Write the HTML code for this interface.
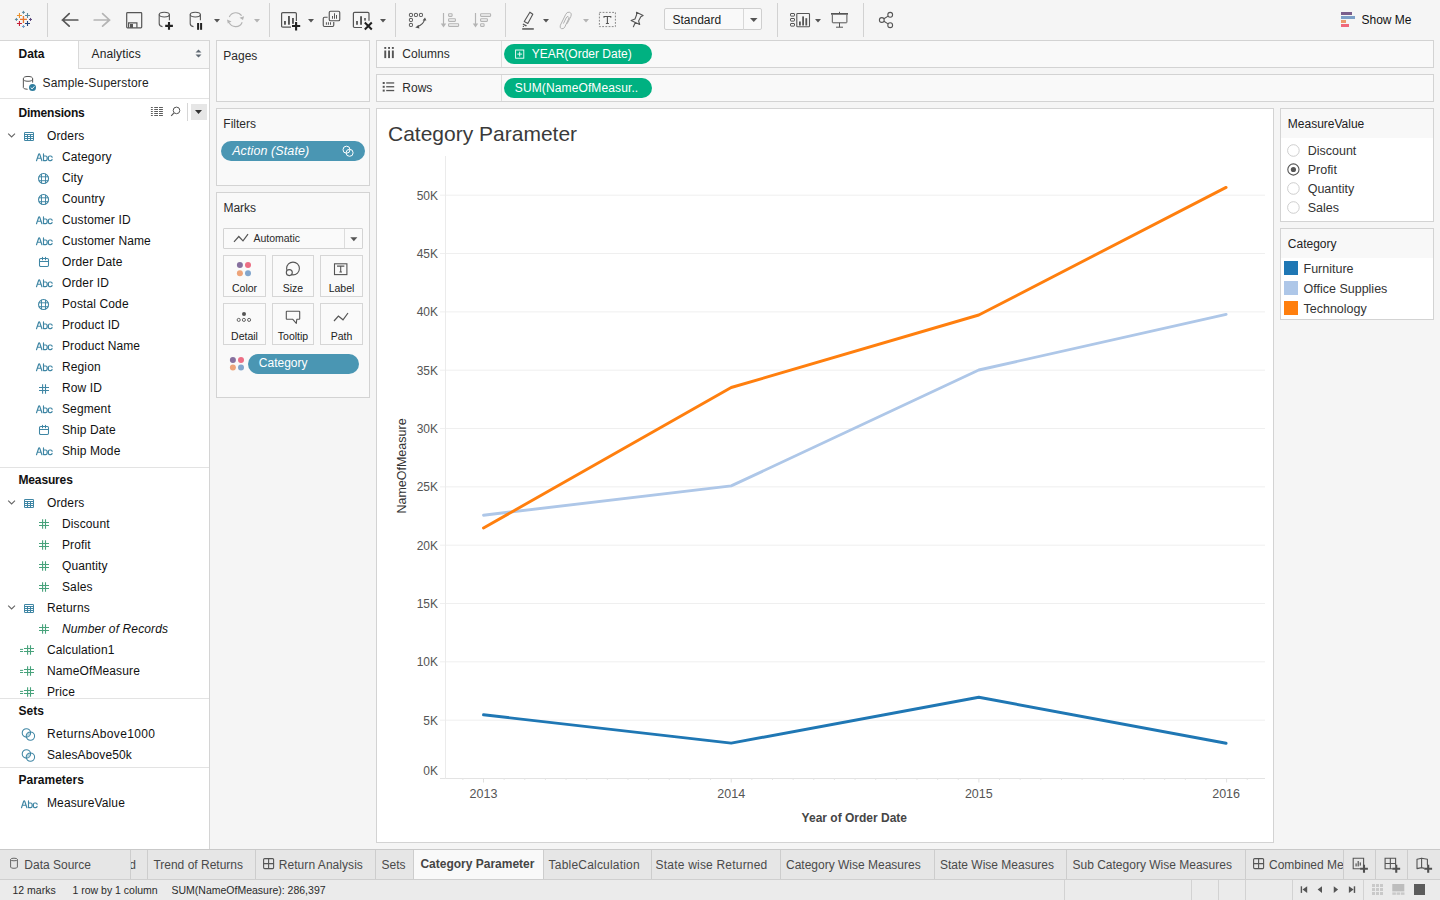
<!DOCTYPE html>
<html><head><meta charset="utf-8"><title>Tableau - Category Parameter</title>
<style>
html,body{margin:0;padding:0;}
body{width:1440px;height:900px;overflow:hidden;position:relative;background:#f5f5f5;font-family:"Liberation Sans", sans-serif;}
.t{position:absolute;white-space:nowrap;line-height:16px;font-family:"Liberation Sans", sans-serif;}
svg{overflow:visible}
</style></head><body>

<svg style="position:absolute;left:8px;top:4px;" width="30" height="30" viewBox="0 0 30 30"><path d="M11.940000000000001 15.440000000000001H18.94M15.440000000000001 11.940000000000001V18.94" stroke="#e8762c" stroke-width="1.3"/><path d="M8.95 11.45H13.95M11.45 8.95V13.95" stroke="#eb912b" stroke-width="1.1"/><path d="M17.0 11.45H22.0M19.5 8.95V13.95" stroke="#5b879b" stroke-width="1.1"/><path d="M8.95 19.5H13.95M11.45 17.0V22.0" stroke="#c72037" stroke-width="1.1"/><path d="M17.0 19.5H22.0M19.5 17.0V22.0" stroke="#1f457e" stroke-width="1.1"/><path d="M13.940000000000001 8.36H16.94M15.440000000000001 6.859999999999999V9.86" stroke="#5b879b" stroke-width="1.0"/><path d="M6.899999999999999 15.440000000000001H9.899999999999999M8.399999999999999 13.940000000000001V16.94" stroke="#5b879b" stroke-width="1.0"/><path d="M21.0 15.440000000000001H24.0M22.5 13.940000000000001V16.94" stroke="#59457c" stroke-width="1.0"/><path d="M13.940000000000001 22.5H16.94M15.440000000000001 21.0V24.0" stroke="#7199c6" stroke-width="1.0"/></svg>
<div style="position:absolute;left:47px;top:3px;width:1px;height:34px;background:#d2d2d2"></div>
<svg style="position:absolute;left:60px;top:12px;" width="20" height="16" viewBox="0 0 20 16"><path d="M2.3 8H17.8M9.2 1.6L2.5 8L9.2 14.2" stroke="#555" stroke-width="1.7" fill="none" stroke-linecap="round" stroke-linejoin="round"/></svg>
<svg style="position:absolute;left:92px;top:12px;" width="20" height="16" viewBox="0 0 20 16"><path d="M2.2 8H17.7M10.6 1.6L17.5 8L10.6 14.2" stroke="#b4b4b4" stroke-width="1.7" fill="none" stroke-linecap="round" stroke-linejoin="round"/></svg>
<svg style="position:absolute;left:124px;top:10px;" width="20" height="20" viewBox="0 0 20 20"><rect x="2.7" y="2.6" width="15" height="15.2" rx="0.8" fill="none" stroke="#555" stroke-width="1.2"/><path d="M4.6 17.8V12.8H12.9V17.8" fill="none" stroke="#555" stroke-width="1.2"/><rect x="6" y="14" width="3" height="3.8" fill="#555"/></svg>
<svg style="position:absolute;left:159px;top:10px;" width="20" height="22" viewBox="0 0 20 22"><ellipse cx="5.3" cy="4.6" rx="5.1" ry="2.4" fill="none" stroke="#555" stroke-width="1.1"/><path d="M0.2 4.6V13.6Q0.2 16.2 3.5 16.6M10.4 4.6V10.2" fill="none" stroke="#555" stroke-width="1.1"/><path d="M6.2 15.9H13.9M10 12V19.8" stroke="#222" stroke-width="2.1"/></svg>
<svg style="position:absolute;left:190px;top:10px;" width="20" height="22" viewBox="0 0 20 22"><ellipse cx="5.3" cy="4.6" rx="5.1" ry="2.4" fill="none" stroke="#555" stroke-width="1.1"/><path d="M0.2 4.6V13.6Q0.2 16.2 3.5 16.6M10.4 4.6V10.2" fill="none" stroke="#555" stroke-width="1.1"/><rect x="7.1" y="13" width="2" height="6.8" fill="#222"/><rect x="10.1" y="13" width="2" height="6.8" fill="#222"/></svg>
<svg style="position:absolute;left:213.5px;top:19px;" width="6" height="4" viewBox="0 0 6 4"><path d="M0 0H6L3 3.5Z" fill="#555"/></svg>
<svg style="position:absolute;left:226px;top:11px;" width="20" height="18" viewBox="0 0 20 18"><path d="M3.3 5.9A7.2 7.2 0 0 1 15.6 4.6M16.2 11.2A7.2 7.2 0 0 1 3.2 11.8" fill="none" stroke="#b4b4b4" stroke-width="1.15"/><path d="M18.1 5.2L17 9L13.5 6.8Z M1 8.5L1.8 12.4L5.5 10.6Z" fill="#b4b4b4"/></svg>
<svg style="position:absolute;left:253.5px;top:19px;" width="6" height="4" viewBox="0 0 6 4"><path d="M0 0H6L3 3.5Z" fill="#b4b4b4"/></svg>
<div style="position:absolute;left:269px;top:3px;width:1px;height:34px;background:#d2d2d2"></div>
<svg style="position:absolute;left:281px;top:12px;" width="22" height="20" viewBox="0 0 22 20"><path d="M10 15.2H1.8Q0.6 15.2 0.6 14V1.8Q0.6 0.6 1.8 0.6H14.2Q15.4 0.6 15.4 1.8V9" fill="none" stroke="#555" stroke-width="1.2"/><rect x="3" y="9" width="1.9" height="3.7" fill="#555"/><rect x="7" y="4" width="1.9" height="8.7" fill="#555"/><rect x="11" y="6" width="1.9" height="5.8" fill="#555"/><path d="M11 14H19.2M15.1 10V18.6" stroke="#222" stroke-width="2.1"/></svg>
<svg style="position:absolute;left:307.5px;top:19px;" width="6" height="4" viewBox="0 0 6 4"><path d="M0 0H6L3 3.5Z" fill="#555"/></svg>
<svg style="position:absolute;left:318px;top:6px;" width="26" height="26" viewBox="0 0 26 26"><rect x="11.25" y="5.25" width="10.5" height="9.5" rx="1.3" fill="none" stroke="#555" stroke-width="1.15"/><rect x="14" y="10" width="1" height="2.75" fill="#555"/><rect x="16" y="7.25" width="1" height="5.5" fill="#555"/><rect x="18" y="9" width="1" height="3.75" fill="#555"/><path d="M9.6 11.25H6.5Q5.25 11.25 5.25 12.5V19.25Q5.25 20.5 6.5 20.5H14.5Q15.75 20.5 15.75 19.25V16" fill="none" stroke="#555" stroke-width="1.15"/><rect x="7.9" y="16.25" width="1" height="2.5" fill="#555"/><rect x="9.9" y="16.25" width="1" height="2.5" fill="#555"/><rect x="12" y="16.25" width="1" height="2.5" fill="#555"/></svg>
<svg style="position:absolute;left:350px;top:6px;" width="26" height="26" viewBox="0 0 26 26"><path d="M12 21.5H4.6Q3.4 21.5 3.4 20.3V7.6Q3.4 6.4 4.6 6.4H17.8Q19 6.4 19 7.6V14.75" fill="none" stroke="#555" stroke-width="1.2"/><rect x="6.1" y="15" width="1.8" height="3.75" fill="#555"/><rect x="10.1" y="10.25" width="1.9" height="8.5" fill="#555"/><rect x="14.2" y="12" width="1.6" height="2.6" fill="#555"/><path d="M14.8 16.5L21.8 23.5M21.8 16.5L14.8 23.5" stroke="#222" stroke-width="2"/></svg>
<svg style="position:absolute;left:379.5px;top:19px;" width="6" height="4" viewBox="0 0 6 4"><path d="M0 0H6L3 3.5Z" fill="#555"/></svg>
<div style="position:absolute;left:395px;top:3px;width:1px;height:34px;background:#d2d2d2"></div>
<svg style="position:absolute;left:405px;top:10px;" width="24" height="20" viewBox="0 0 24 20"><rect x="4.45" y="3.45" width="3" height="3" rx="0.6" fill="none" stroke="#555" stroke-width="1"/><rect x="9.45" y="3.45" width="3" height="3" rx="0.6" fill="none" stroke="#555" stroke-width="1"/><rect x="14.45" y="3.45" width="3" height="3" rx="0.6" fill="none" stroke="#555" stroke-width="1"/><rect x="4.45" y="8.45" width="3" height="3" rx="0.6" fill="none" stroke="#555" stroke-width="1"/><rect x="4.45" y="13.45" width="3" height="3" rx="0.6" fill="none" stroke="#555" stroke-width="1"/><path d="M12.2 16.6Q18.2 15 19.6 9.4" fill="none" stroke="#555" stroke-width="1.1"/><path d="M10.2 17.6L13.6 15L14.4 18.6Z M20 7.6L17.6 10.6L21.4 10.6Z" fill="#555"/></svg>
<svg style="position:absolute;left:440px;top:10px;" width="20" height="20" viewBox="0 0 20 20"><path d="M3.5 3V15.5" stroke="#b4b4b4" stroke-width="1.2"/><path d="M0.8 13.6H6.2L3.5 17.4Z" fill="#b4b4b4"/><rect x="8.6" y="3.8" width="3.5" height="2.6" rx="0.6" fill="none" stroke="#b4b4b4" stroke-width="1.1"/><rect x="8.6" y="8.8" width="6.8" height="2.6" rx="0.6" fill="none" stroke="#b4b4b4" stroke-width="1.1"/><rect x="8.6" y="13.8" width="10" height="2.6" rx="0.6" fill="none" stroke="#b4b4b4" stroke-width="1.1"/></svg>
<svg style="position:absolute;left:472px;top:10px;" width="20" height="20" viewBox="0 0 20 20"><path d="M3.5 3V15.5" stroke="#b4b4b4" stroke-width="1.2"/><path d="M0.8 13.6H6.2L3.5 17.4Z" fill="#b4b4b4"/><rect x="8.6" y="3.8" width="10" height="2.6" rx="0.6" fill="none" stroke="#b4b4b4" stroke-width="1.1"/><rect x="8.6" y="8.8" width="6.8" height="2.6" rx="0.6" fill="none" stroke="#b4b4b4" stroke-width="1.1"/><rect x="8.6" y="13.8" width="3.5" height="2.6" rx="0.6" fill="none" stroke="#b4b4b4" stroke-width="1.1"/></svg>
<div style="position:absolute;left:505px;top:3px;width:1px;height:34px;background:#d2d2d2"></div>
<svg style="position:absolute;left:518px;top:8px;" width="20" height="24" viewBox="0 0 20 24"><path d="M11.9 4.2L14.8 6.25L9.8 15.4L6.25 13.5Z" fill="none" stroke="#555" stroke-width="1.1" stroke-linejoin="round"/><path d="M5.2 15.4L9 17.4L8 18.4L4.6 16.6Z" fill="#555"/><circle cx="5.4" cy="18.4" r="0.65" fill="#555"/><rect x="4.2" y="20.2" width="11.6" height="1.5" fill="#555"/></svg>
<svg style="position:absolute;left:543px;top:19px;" width="6" height="4" viewBox="0 0 6 4"><path d="M0 0H6L3 3.5Z" fill="#555"/></svg>
<svg style="position:absolute;left:556px;top:7.5px;" width="20" height="24" viewBox="0 0 20 24"><path d="M11.3 15.4L14.8 8.5Q16.2 5 13.3 4.2Q10.9 3.6 9.6 6.6L4.4 17.2Q3.2 20 5.6 20.7Q7.8 21.3 8.9 18.8L12.6 11Q13.4 9 12.1 8.6Q10.9 8.2 10.1 10L7.6 15.2" fill="none" stroke="#adadad" stroke-width="0.95" stroke-linecap="round"/></svg>
<svg style="position:absolute;left:583px;top:19px;" width="6" height="4" viewBox="0 0 6 4"><path d="M0 0H6L3 3.5Z" fill="#b4b4b4"/></svg>
<svg style="position:absolute;left:598px;top:11px;" width="20" height="18" viewBox="0 0 20 18"><rect x="1.4" y="1.4" width="16" height="14.2" fill="none" stroke="#888" stroke-width="1" stroke-dasharray="1.8 1.4"/><path d="M6 6.7V5.5H12.8V6.7M9.4 5.5V12.5M7.9 12.5H10.9" fill="none" stroke="#555" stroke-width="1.1"/></svg>
<svg style="position:absolute;left:629px;top:10px;" width="18" height="20" viewBox="0 0 18 20"><path d="M7.5 2.2L14.1 5.4L11.8 6.7L9.6 11L10.7 14.5L2.1 10.5L6 9L7.6 4.7Z M6.3 12.6L4.4 16.7" fill="none" stroke="#555" stroke-width="1.1" stroke-linejoin="round" stroke-linecap="round"/></svg>
<div style="position:absolute;left:664px;top:8px;width:98px;height:22px;background:#f9f9f9;border:1px solid #cfcfcf;border-radius:2px;box-sizing:border-box"></div>
<div style="position:absolute;left:743px;top:9px;width:1px;height:21px;background:#d8d8d8"></div>
<div class="t" style="left:672.5px;top:12.0px;font-size:12px;color:#222;font-weight:normal;font-style:normal;">Standard</div>
<svg style="position:absolute;left:749.5px;top:17.5px;" width="8" height="5" viewBox="0 0 8 5"><path d="M0 0H7.5L3.75 4Z" fill="#555"/></svg>
<div style="position:absolute;left:777px;top:3px;width:1px;height:34px;background:#d2d2d2"></div>
<svg style="position:absolute;left:788px;top:11px;" width="30" height="18" viewBox="0 0 30 18"><rect x="2.5" y="2.5" width="4" height="2.6" rx="0.5" fill="none" stroke="#555" stroke-width="1"/><rect x="2.5" y="7.5" width="4" height="2.6" rx="0.5" fill="none" stroke="#555" stroke-width="1"/><rect x="2.5" y="12.5" width="4" height="2.6" rx="0.5" fill="none" stroke="#555" stroke-width="1"/><rect x="8.8" y="2.5" width="12.7" height="13.3" rx="0.8" fill="none" stroke="#555" stroke-width="1.1"/><rect x="11" y="10.5" width="1.8" height="4" fill="#555"/><rect x="14.2" y="5.4" width="1.8" height="9.1" fill="#555"/><rect x="17.4" y="7.2" width="1.8" height="7.3" fill="#555"/></svg>
<svg style="position:absolute;left:815px;top:19px;" width="6" height="4" viewBox="0 0 6 4"><path d="M0 0H6L3 3.5Z" fill="#555"/></svg>
<svg style="position:absolute;left:829px;top:10px;" width="22" height="20" viewBox="0 0 22 20"><rect x="2" y="3" width="17" height="1.7" fill="#555"/><path d="M10.5 1.8V3M3.3 4.6V12.2Q3.3 12.8 3.9 12.8H17.3Q17.9 12.8 17.9 12.2V4.6M10.5 12.8V17.2M7 17.2H14" fill="none" stroke="#555" stroke-width="1"/></svg>
<div style="position:absolute;left:863px;top:3px;width:1px;height:34px;background:#d2d2d2"></div>
<svg style="position:absolute;left:877px;top:10px;" width="20" height="20" viewBox="0 0 20 20"><circle cx="13.2" cy="4.8" r="2.4" fill="none" stroke="#555" stroke-width="1.1"/><circle cx="4.8" cy="10" r="2.4" fill="none" stroke="#555" stroke-width="1.1"/><circle cx="13.2" cy="15.2" r="2.4" fill="none" stroke="#555" stroke-width="1.1"/><path d="M6.9 8.8L11.1 6.1M6.9 11.2L11.1 13.9" stroke="#555" stroke-width="1.1"/></svg>
<div style="position:absolute;left:1341px;top:12px;width:11px;height:3px;background:#7b5f8c"></div>
<div style="position:absolute;left:1341px;top:16px;width:14px;height:3px;background:#7c9fc7"></div>
<div style="position:absolute;left:1341px;top:20.2px;width:5px;height:2.6px;background:#eb9a6a"></div>
<div style="position:absolute;left:1341px;top:24px;width:8px;height:3px;background:#f0687a"></div>
<div class="t" style="left:1361.5px;top:11.5px;font-size:12px;color:#111;font-weight:normal;font-style:normal;">Show Me</div>
<div style="position:absolute;left:0px;top:40px;width:210px;height:1px;background:#d6d6d6"></div>
<div style="position:absolute;left:0px;top:41px;width:209px;height:808px;background:#fff"></div>
<div style="position:absolute;left:209px;top:41px;width:1px;height:808px;background:#d4d4d4"></div>
<div style="position:absolute;left:78px;top:41px;width:131px;height:27px;background:#f7f7f7;border-left:1px solid #d9d9d9;border-bottom:1px solid #d9d9d9;box-sizing:border-box;width:131px;height:28px"></div>
<div class="t" style="left:18.5px;top:46.0px;font-size:12px;color:#111;font-weight:bold;font-style:normal;">Data</div>
<div class="t" style="left:91.5px;top:46.0px;font-size:12px;color:#222;font-weight:normal;font-style:normal;letter-spacing:0.15px">Analytics</div>
<svg style="position:absolute;left:194px;top:48px;" width="10" height="12" viewBox="0 0 10 12"><path d="M1.5 4.6L4.5 1.4L7.5 4.6Z M1.5 6.4L4.5 9.6L7.5 6.4Z" fill="#606a74"/></svg>
<svg style="position:absolute;left:20px;top:74px;" width="20" height="20" viewBox="0 0 20 20"><ellipse cx="8" cy="4.85" rx="4.65" ry="2.4" fill="none" stroke="#555" stroke-width="1"/><path d="M3.35 4.85V13.6Q3.35 15.2 7.6 15.3" fill="none" stroke="#555" stroke-width="1"/><path d="M12.65 4.85V8.6" stroke="#555" stroke-width="1"/><circle cx="12.5" cy="13.5" r="3.5" fill="#2e7d9e"/><path d="M10.7 13.5L12.1 14.9L14.4 12.3" fill="none" stroke="#fff" stroke-width="0.95"/></svg>
<div class="t" style="left:42.5px;top:75.0px;font-size:12px;color:#222;font-weight:normal;font-style:normal;letter-spacing:0.17px">Sample-Superstore</div>
<div style="position:absolute;left:0px;top:98px;width:209px;height:1px;background:#e3e3e3"></div>
<div class="t" style="left:18.5px;top:104.5px;font-size:12px;color:#111;font-weight:bold;font-style:normal;letter-spacing:-0.2px">Dimensions</div>
<svg style="position:absolute;left:149px;top:104px;" width="16" height="14" viewBox="0 0 16 14"><rect x="1.9" y="3.0" width="1.9" height="0.95" fill="#555"/><rect x="5.2" y="3.0" width="3.8" height="0.95" fill="#555"/><rect x="10" y="3.0" width="3.9" height="0.95" fill="#555"/><rect x="1.9" y="5.0" width="1.9" height="0.95" fill="#555"/><rect x="5.2" y="5.0" width="3.8" height="0.95" fill="#555"/><rect x="10" y="5.0" width="3.9" height="0.95" fill="#555"/><rect x="1.9" y="7.0" width="1.9" height="0.95" fill="#555"/><rect x="5.2" y="7.0" width="3.8" height="0.95" fill="#555"/><rect x="10" y="7.0" width="3.9" height="0.95" fill="#555"/><rect x="1.9" y="9.0" width="1.9" height="0.95" fill="#555"/><rect x="5.2" y="9.0" width="3.8" height="0.95" fill="#555"/><rect x="10" y="9.0" width="3.9" height="0.95" fill="#555"/><rect x="1.9" y="11.0" width="1.9" height="0.95" fill="#555"/><rect x="5.2" y="11.0" width="3.8" height="0.95" fill="#555"/><rect x="10" y="11.0" width="3.9" height="0.95" fill="#555"/></svg>
<svg style="position:absolute;left:169px;top:104px;" width="14" height="14" viewBox="0 0 14 14"><circle cx="7.5" cy="6.4" r="3.3" fill="none" stroke="#555" stroke-width="1"/><path d="M4.8 9.2L2.2 11.9" stroke="#555" stroke-width="1.2"/></svg>
<div style="position:absolute;left:187px;top:103px;width:1px;height:18px;background:#d6d6d6"></div>
<div style="position:absolute;left:191px;top:104px;width:16px;height:16px;background:#e6e6e6"></div>
<svg style="position:absolute;left:195px;top:110px;" width="8" height="5" viewBox="0 0 8 5"><path d="M0 0H7L3.5 4Z" fill="#333"/></svg>
<svg style="position:absolute;left:6px;top:131px;" width="12" height="8" viewBox="0 0 12 8"><path d="M2.2 2.6L5.6 6L9 2.6" fill="none" stroke="#666" stroke-width="1.1"/></svg>
<svg style="position:absolute;left:24px;top:132px;" width="10" height="9" viewBox="0 0 10 9"><rect x="0" y="0" width="10" height="9" rx="1.3" fill="#3f86a4"/><rect x="1" y="1" width="8" height="1" fill="#fff"/><rect x="1" y="3" width="2" height="1" fill="#fff"/><rect x="4" y="3" width="2" height="1" fill="#fff"/><rect x="7" y="3" width="2" height="1" fill="#fff"/><rect x="1" y="5" width="2" height="1" fill="#fff"/><rect x="4" y="5" width="2" height="1" fill="#fff"/><rect x="7" y="5" width="2" height="1" fill="#fff"/><rect x="1" y="7" width="2" height="1" fill="#fff"/><rect x="4" y="7" width="2" height="1" fill="#fff"/><rect x="7" y="7" width="2" height="1" fill="#fff"/></svg>
<div class="t" style="left:47px;top:128.0px;font-size:12px;color:#111;font-weight:normal;font-style:normal;letter-spacing:0.12px">Orders</div>
<svg style="position:absolute;left:35px;top:153.4px;" width="19" height="10" viewBox="0 0 19 10"><path d="M1.5 7.7L3.5 1.7Q3.8 0.9 4.2 0.9Q4.6 0.9 4.9 1.7L6.9 7.7M2.5 5.2H5.9M8.5 0.9V7.6H10.7Q12.1 7.6 12.1 6.2V4.4Q12.1 3 10.7 3H8.5M17.1 4.3Q17.1 3 15.7 3H14.7Q13.4 3 13.4 4.4V6.2Q13.4 7.6 14.7 7.6H15.7Q17.1 7.6 17.1 6.3" fill="none" stroke="#3f86a4" stroke-width="1.15" stroke-linecap="round" stroke-linejoin="round"/></svg>
<div class="t" style="left:62px;top:149.0px;font-size:12px;color:#111;font-weight:normal;font-style:normal;letter-spacing:0.12px">Category</div>
<svg style="position:absolute;left:37px;top:171.85px;" width="13" height="13" viewBox="0 0 13 13"><circle cx="6.55" cy="6.55" r="5" fill="none" stroke="#3f86a4" stroke-width="1.1"/><path d="M4.5 1.8V11.3M8.5 1.8V11.3M1.8 4.8H11.3M1.8 8.7H11.3" stroke="#3f86a4" stroke-width="0.95"/></svg>
<div class="t" style="left:62px;top:170.0px;font-size:12px;color:#111;font-weight:normal;font-style:normal;letter-spacing:0.12px">City</div>
<svg style="position:absolute;left:37px;top:192.85px;" width="13" height="13" viewBox="0 0 13 13"><circle cx="6.55" cy="6.55" r="5" fill="none" stroke="#3f86a4" stroke-width="1.1"/><path d="M4.5 1.8V11.3M8.5 1.8V11.3M1.8 4.8H11.3M1.8 8.7H11.3" stroke="#3f86a4" stroke-width="0.95"/></svg>
<div class="t" style="left:62px;top:191.0px;font-size:12px;color:#111;font-weight:normal;font-style:normal;letter-spacing:0.12px">Country</div>
<svg style="position:absolute;left:35px;top:216.4px;" width="19" height="10" viewBox="0 0 19 10"><path d="M1.5 7.7L3.5 1.7Q3.8 0.9 4.2 0.9Q4.6 0.9 4.9 1.7L6.9 7.7M2.5 5.2H5.9M8.5 0.9V7.6H10.7Q12.1 7.6 12.1 6.2V4.4Q12.1 3 10.7 3H8.5M17.1 4.3Q17.1 3 15.7 3H14.7Q13.4 3 13.4 4.4V6.2Q13.4 7.6 14.7 7.6H15.7Q17.1 7.6 17.1 6.3" fill="none" stroke="#3f86a4" stroke-width="1.15" stroke-linecap="round" stroke-linejoin="round"/></svg>
<div class="t" style="left:62px;top:212.0px;font-size:12px;color:#111;font-weight:normal;font-style:normal;letter-spacing:0.12px">Customer ID</div>
<svg style="position:absolute;left:35px;top:237.4px;" width="19" height="10" viewBox="0 0 19 10"><path d="M1.5 7.7L3.5 1.7Q3.8 0.9 4.2 0.9Q4.6 0.9 4.9 1.7L6.9 7.7M2.5 5.2H5.9M8.5 0.9V7.6H10.7Q12.1 7.6 12.1 6.2V4.4Q12.1 3 10.7 3H8.5M17.1 4.3Q17.1 3 15.7 3H14.7Q13.4 3 13.4 4.4V6.2Q13.4 7.6 14.7 7.6H15.7Q17.1 7.6 17.1 6.3" fill="none" stroke="#3f86a4" stroke-width="1.15" stroke-linecap="round" stroke-linejoin="round"/></svg>
<div class="t" style="left:62px;top:233.0px;font-size:12px;color:#111;font-weight:normal;font-style:normal;letter-spacing:0.12px">Customer Name</div>
<svg style="position:absolute;left:38px;top:256px;" width="12" height="12" viewBox="0 0 12 12"><rect x="1.5" y="2.5" width="9" height="8" rx="1.2" fill="none" stroke="#3f86a4" stroke-width="1.05"/><path d="M1.5 5.5H10.5M4.5 1.2V3.7M7.5 1.2V3.7" stroke="#3f86a4" stroke-width="1.05" stroke-linecap="round"/></svg>
<div class="t" style="left:62px;top:254.0px;font-size:12px;color:#111;font-weight:normal;font-style:normal;letter-spacing:0.12px">Order Date</div>
<svg style="position:absolute;left:35px;top:279.4px;" width="19" height="10" viewBox="0 0 19 10"><path d="M1.5 7.7L3.5 1.7Q3.8 0.9 4.2 0.9Q4.6 0.9 4.9 1.7L6.9 7.7M2.5 5.2H5.9M8.5 0.9V7.6H10.7Q12.1 7.6 12.1 6.2V4.4Q12.1 3 10.7 3H8.5M17.1 4.3Q17.1 3 15.7 3H14.7Q13.4 3 13.4 4.4V6.2Q13.4 7.6 14.7 7.6H15.7Q17.1 7.6 17.1 6.3" fill="none" stroke="#3f86a4" stroke-width="1.15" stroke-linecap="round" stroke-linejoin="round"/></svg>
<div class="t" style="left:62px;top:275.0px;font-size:12px;color:#111;font-weight:normal;font-style:normal;letter-spacing:0.12px">Order ID</div>
<svg style="position:absolute;left:37px;top:297.85px;" width="13" height="13" viewBox="0 0 13 13"><circle cx="6.55" cy="6.55" r="5" fill="none" stroke="#3f86a4" stroke-width="1.1"/><path d="M4.5 1.8V11.3M8.5 1.8V11.3M1.8 4.8H11.3M1.8 8.7H11.3" stroke="#3f86a4" stroke-width="0.95"/></svg>
<div class="t" style="left:62px;top:296.0px;font-size:12px;color:#111;font-weight:normal;font-style:normal;letter-spacing:0.12px">Postal Code</div>
<svg style="position:absolute;left:35px;top:321.4px;" width="19" height="10" viewBox="0 0 19 10"><path d="M1.5 7.7L3.5 1.7Q3.8 0.9 4.2 0.9Q4.6 0.9 4.9 1.7L6.9 7.7M2.5 5.2H5.9M8.5 0.9V7.6H10.7Q12.1 7.6 12.1 6.2V4.4Q12.1 3 10.7 3H8.5M17.1 4.3Q17.1 3 15.7 3H14.7Q13.4 3 13.4 4.4V6.2Q13.4 7.6 14.7 7.6H15.7Q17.1 7.6 17.1 6.3" fill="none" stroke="#3f86a4" stroke-width="1.15" stroke-linecap="round" stroke-linejoin="round"/></svg>
<div class="t" style="left:62px;top:317.0px;font-size:12px;color:#111;font-weight:normal;font-style:normal;letter-spacing:0.12px">Product ID</div>
<svg style="position:absolute;left:35px;top:342.4px;" width="19" height="10" viewBox="0 0 19 10"><path d="M1.5 7.7L3.5 1.7Q3.8 0.9 4.2 0.9Q4.6 0.9 4.9 1.7L6.9 7.7M2.5 5.2H5.9M8.5 0.9V7.6H10.7Q12.1 7.6 12.1 6.2V4.4Q12.1 3 10.7 3H8.5M17.1 4.3Q17.1 3 15.7 3H14.7Q13.4 3 13.4 4.4V6.2Q13.4 7.6 14.7 7.6H15.7Q17.1 7.6 17.1 6.3" fill="none" stroke="#3f86a4" stroke-width="1.15" stroke-linecap="round" stroke-linejoin="round"/></svg>
<div class="t" style="left:62px;top:338.0px;font-size:12px;color:#111;font-weight:normal;font-style:normal;letter-spacing:0.12px">Product Name</div>
<svg style="position:absolute;left:35px;top:363.4px;" width="19" height="10" viewBox="0 0 19 10"><path d="M1.5 7.7L3.5 1.7Q3.8 0.9 4.2 0.9Q4.6 0.9 4.9 1.7L6.9 7.7M2.5 5.2H5.9M8.5 0.9V7.6H10.7Q12.1 7.6 12.1 6.2V4.4Q12.1 3 10.7 3H8.5M17.1 4.3Q17.1 3 15.7 3H14.7Q13.4 3 13.4 4.4V6.2Q13.4 7.6 14.7 7.6H15.7Q17.1 7.6 17.1 6.3" fill="none" stroke="#3f86a4" stroke-width="1.15" stroke-linecap="round" stroke-linejoin="round"/></svg>
<div class="t" style="left:62px;top:359.0px;font-size:12px;color:#111;font-weight:normal;font-style:normal;letter-spacing:0.12px">Region</div>
<svg style="position:absolute;left:38px;top:382.5px;" width="12" height="12" viewBox="0 0 12 12"><path d="M4.6 1.2V10.8M7.5 1.2V10.8M1 4.5H11M1 7.5H11" stroke="#3f86a4" stroke-width="1.1"/></svg>
<div class="t" style="left:62px;top:380.0px;font-size:12px;color:#111;font-weight:normal;font-style:normal;letter-spacing:0.12px">Row ID</div>
<svg style="position:absolute;left:35px;top:405.4px;" width="19" height="10" viewBox="0 0 19 10"><path d="M1.5 7.7L3.5 1.7Q3.8 0.9 4.2 0.9Q4.6 0.9 4.9 1.7L6.9 7.7M2.5 5.2H5.9M8.5 0.9V7.6H10.7Q12.1 7.6 12.1 6.2V4.4Q12.1 3 10.7 3H8.5M17.1 4.3Q17.1 3 15.7 3H14.7Q13.4 3 13.4 4.4V6.2Q13.4 7.6 14.7 7.6H15.7Q17.1 7.6 17.1 6.3" fill="none" stroke="#3f86a4" stroke-width="1.15" stroke-linecap="round" stroke-linejoin="round"/></svg>
<div class="t" style="left:62px;top:401.0px;font-size:12px;color:#111;font-weight:normal;font-style:normal;letter-spacing:0.12px">Segment</div>
<svg style="position:absolute;left:38px;top:424px;" width="12" height="12" viewBox="0 0 12 12"><rect x="1.5" y="2.5" width="9" height="8" rx="1.2" fill="none" stroke="#3f86a4" stroke-width="1.05"/><path d="M1.5 5.5H10.5M4.5 1.2V3.7M7.5 1.2V3.7" stroke="#3f86a4" stroke-width="1.05" stroke-linecap="round"/></svg>
<div class="t" style="left:62px;top:422.0px;font-size:12px;color:#111;font-weight:normal;font-style:normal;letter-spacing:0.12px">Ship Date</div>
<svg style="position:absolute;left:35px;top:447.4px;" width="19" height="10" viewBox="0 0 19 10"><path d="M1.5 7.7L3.5 1.7Q3.8 0.9 4.2 0.9Q4.6 0.9 4.9 1.7L6.9 7.7M2.5 5.2H5.9M8.5 0.9V7.6H10.7Q12.1 7.6 12.1 6.2V4.4Q12.1 3 10.7 3H8.5M17.1 4.3Q17.1 3 15.7 3H14.7Q13.4 3 13.4 4.4V6.2Q13.4 7.6 14.7 7.6H15.7Q17.1 7.6 17.1 6.3" fill="none" stroke="#3f86a4" stroke-width="1.15" stroke-linecap="round" stroke-linejoin="round"/></svg>
<div class="t" style="left:62px;top:443.0px;font-size:12px;color:#111;font-weight:normal;font-style:normal;letter-spacing:0.12px">Ship Mode</div>
<div style="position:absolute;left:0px;top:467px;width:209px;height:1px;background:#e3e3e3"></div>
<div class="t" style="left:18.5px;top:471.5px;font-size:12px;color:#111;font-weight:bold;font-style:normal;letter-spacing:-0.15px">Measures</div>
<svg style="position:absolute;left:6px;top:497.7px;" width="12" height="8" viewBox="0 0 12 8"><path d="M2.2 2.6L5.6 6L9 2.6" fill="none" stroke="#666" stroke-width="1.1"/></svg>
<svg style="position:absolute;left:24px;top:499px;" width="10" height="9" viewBox="0 0 10 9"><rect x="0" y="0" width="10" height="9" rx="1.3" fill="#3f86a4"/><rect x="1" y="1" width="8" height="1" fill="#fff"/><rect x="1" y="3" width="2" height="1" fill="#fff"/><rect x="4" y="3" width="2" height="1" fill="#fff"/><rect x="7" y="3" width="2" height="1" fill="#fff"/><rect x="1" y="5" width="2" height="1" fill="#fff"/><rect x="4" y="5" width="2" height="1" fill="#fff"/><rect x="7" y="5" width="2" height="1" fill="#fff"/><rect x="1" y="7" width="2" height="1" fill="#fff"/><rect x="4" y="7" width="2" height="1" fill="#fff"/><rect x="7" y="7" width="2" height="1" fill="#fff"/></svg>
<div class="t" style="left:47px;top:494.5px;font-size:12px;color:#111;font-weight:normal;font-style:normal;letter-spacing:0.12px">Orders</div>
<svg style="position:absolute;left:38px;top:518.2px;" width="12" height="12" viewBox="0 0 12 12"><path d="M4.6 1.2V10.8M7.5 1.2V10.8M1 4.5H11M1 7.5H11" stroke="#47a27b" stroke-width="1.1"/></svg>
<div class="t" style="left:62px;top:515.5px;font-size:12px;color:#111;font-weight:normal;font-style:normal;letter-spacing:0.12px">Discount</div>
<svg style="position:absolute;left:38px;top:539.2px;" width="12" height="12" viewBox="0 0 12 12"><path d="M4.6 1.2V10.8M7.5 1.2V10.8M1 4.5H11M1 7.5H11" stroke="#47a27b" stroke-width="1.1"/></svg>
<div class="t" style="left:62px;top:536.5px;font-size:12px;color:#111;font-weight:normal;font-style:normal;letter-spacing:0.12px">Profit</div>
<svg style="position:absolute;left:38px;top:560.2px;" width="12" height="12" viewBox="0 0 12 12"><path d="M4.6 1.2V10.8M7.5 1.2V10.8M1 4.5H11M1 7.5H11" stroke="#47a27b" stroke-width="1.1"/></svg>
<div class="t" style="left:62px;top:557.5px;font-size:12px;color:#111;font-weight:normal;font-style:normal;letter-spacing:0.12px">Quantity</div>
<svg style="position:absolute;left:38px;top:581.2px;" width="12" height="12" viewBox="0 0 12 12"><path d="M4.6 1.2V10.8M7.5 1.2V10.8M1 4.5H11M1 7.5H11" stroke="#47a27b" stroke-width="1.1"/></svg>
<div class="t" style="left:62px;top:578.5px;font-size:12px;color:#111;font-weight:normal;font-style:normal;letter-spacing:0.12px">Sales</div>
<svg style="position:absolute;left:6px;top:602.7px;" width="12" height="8" viewBox="0 0 12 8"><path d="M2.2 2.6L5.6 6L9 2.6" fill="none" stroke="#666" stroke-width="1.1"/></svg>
<svg style="position:absolute;left:24px;top:604px;" width="10" height="9" viewBox="0 0 10 9"><rect x="0" y="0" width="10" height="9" rx="1.3" fill="#3f86a4"/><rect x="1" y="1" width="8" height="1" fill="#fff"/><rect x="1" y="3" width="2" height="1" fill="#fff"/><rect x="4" y="3" width="2" height="1" fill="#fff"/><rect x="7" y="3" width="2" height="1" fill="#fff"/><rect x="1" y="5" width="2" height="1" fill="#fff"/><rect x="4" y="5" width="2" height="1" fill="#fff"/><rect x="7" y="5" width="2" height="1" fill="#fff"/><rect x="1" y="7" width="2" height="1" fill="#fff"/><rect x="4" y="7" width="2" height="1" fill="#fff"/><rect x="7" y="7" width="2" height="1" fill="#fff"/></svg>
<div class="t" style="left:47px;top:599.5px;font-size:12px;color:#111;font-weight:normal;font-style:normal;letter-spacing:0.12px">Returns</div>
<svg style="position:absolute;left:38px;top:623.2px;" width="12" height="12" viewBox="0 0 12 12"><path d="M4.6 1.2V10.8M7.5 1.2V10.8M1 4.5H11M1 7.5H11" stroke="#47a27b" stroke-width="1.1"/></svg>
<div class="t" style="left:62px;top:620.5px;font-size:12px;color:#111;font-weight:normal;font-style:italic;letter-spacing:0.12px">Number of Records</div>
<svg style="position:absolute;left:19px;top:644.2px;" width="4" height="12" viewBox="0 0 4 12"><path d="M1 5.4H4.1M1 7.5H4.1" stroke="#47a27b" stroke-width="1"/></svg>
<svg style="position:absolute;left:23px;top:644.2px;" width="12" height="12" viewBox="0 0 12 12"><path d="M4.6 1.2V10.8M7.5 1.2V10.8M1 4.5H11M1 7.5H11" stroke="#47a27b" stroke-width="1.1"/></svg>
<div class="t" style="left:47px;top:641.5px;font-size:12px;color:#111;font-weight:normal;font-style:normal;letter-spacing:0.12px">Calculation1</div>
<svg style="position:absolute;left:19px;top:665.2px;" width="4" height="12" viewBox="0 0 4 12"><path d="M1 5.4H4.1M1 7.5H4.1" stroke="#47a27b" stroke-width="1"/></svg>
<svg style="position:absolute;left:23px;top:665.2px;" width="12" height="12" viewBox="0 0 12 12"><path d="M4.6 1.2V10.8M7.5 1.2V10.8M1 4.5H11M1 7.5H11" stroke="#47a27b" stroke-width="1.1"/></svg>
<div class="t" style="left:47px;top:662.5px;font-size:12px;color:#111;font-weight:normal;font-style:normal;letter-spacing:0.12px">NameOfMeasure</div>
<svg style="position:absolute;left:19px;top:686.2px;" width="4" height="12" viewBox="0 0 4 12"><path d="M1 5.4H4.1M1 7.5H4.1" stroke="#47a27b" stroke-width="1"/></svg>
<svg style="position:absolute;left:23px;top:686.2px;" width="12" height="12" viewBox="0 0 12 12"><path d="M4.6 1.2V10.8M7.5 1.2V10.8M1 4.5H11M1 7.5H11" stroke="#47a27b" stroke-width="1.1"/></svg>
<div class="t" style="left:47px;top:683.5px;font-size:12px;color:#111;font-weight:normal;font-style:normal;letter-spacing:0.12px">Price</div>
<div style="position:absolute;left:0px;top:698px;width:209px;height:1px;background:#e3e3e3"></div>
<div class="t" style="left:18.5px;top:702.5px;font-size:12px;color:#111;font-weight:bold;font-style:normal;">Sets</div>
<svg style="position:absolute;left:20px;top:727.0px;" width="17" height="15" viewBox="0 0 17 15"><defs><clipPath id="cp737"><circle cx="6.4" cy="5.9" r="4.2"/></clipPath></defs><circle cx="10.4" cy="9.1" r="4.2" fill="#3f86a4" fill-opacity="0.35" clip-path="url(#cp737)"/><circle cx="6.4" cy="5.9" r="4.2" fill="none" stroke="#3f86a4" stroke-width="1.05"/><circle cx="10.4" cy="9.1" r="4.2" fill="none" stroke="#3f86a4" stroke-width="1.05"/></svg>
<div class="t" style="left:47px;top:725.5px;font-size:12px;color:#111;font-weight:normal;font-style:normal;letter-spacing:0.35px">ReturnsAbove1000</div>
<svg style="position:absolute;left:20px;top:748.0px;" width="17" height="15" viewBox="0 0 17 15"><defs><clipPath id="cp758"><circle cx="6.4" cy="5.9" r="4.2"/></clipPath></defs><circle cx="10.4" cy="9.1" r="4.2" fill="#3f86a4" fill-opacity="0.35" clip-path="url(#cp758)"/><circle cx="6.4" cy="5.9" r="4.2" fill="none" stroke="#3f86a4" stroke-width="1.05"/><circle cx="10.4" cy="9.1" r="4.2" fill="none" stroke="#3f86a4" stroke-width="1.05"/></svg>
<div class="t" style="left:47px;top:746.5px;font-size:12px;color:#111;font-weight:normal;font-style:normal;letter-spacing:0.12px">SalesAbove50k</div>
<div style="position:absolute;left:0px;top:767px;width:209px;height:1px;background:#e3e3e3"></div>
<div class="t" style="left:18.5px;top:772.0px;font-size:12px;color:#111;font-weight:bold;font-style:normal;">Parameters</div>
<svg style="position:absolute;left:20px;top:799.6px;" width="19" height="10" viewBox="0 0 19 10"><path d="M1.5 7.7L3.5 1.7Q3.8 0.9 4.2 0.9Q4.6 0.9 4.9 1.7L6.9 7.7M2.5 5.2H5.9M8.5 0.9V7.6H10.7Q12.1 7.6 12.1 6.2V4.4Q12.1 3 10.7 3H8.5M17.1 4.3Q17.1 3 15.7 3H14.7Q13.4 3 13.4 4.4V6.2Q13.4 7.6 14.7 7.6H15.7Q17.1 7.6 17.1 6.3" fill="none" stroke="#3f86a4" stroke-width="1.15" stroke-linecap="round" stroke-linejoin="round"/></svg>
<div class="t" style="left:47px;top:795.0px;font-size:12px;color:#111;font-weight:normal;font-style:normal;letter-spacing:0.12px">MeasureValue</div>
<div style="position:absolute;left:216px;top:40px;width:154px;height:62px;background:#f9f9f9;border:1px solid #d3d3d3;box-sizing:border-box"></div>
<div class="t" style="left:223.3px;top:48.0px;font-size:12px;color:#2b2b2b;font-weight:normal;font-style:normal;">Pages</div>
<div style="position:absolute;left:216px;top:108px;width:154px;height:78px;background:#f9f9f9;border:1px solid #d3d3d3;box-sizing:border-box"></div>
<div class="t" style="left:223.3px;top:116.0px;font-size:12px;color:#2b2b2b;font-weight:normal;font-style:normal;">Filters</div>
<div style="position:absolute;left:221px;top:141px;width:144px;height:20px;background:#4a96b3;border-radius:10px"></div>
<div class="t" style="left:232.2px;top:143.0px;font-size:12.5px;color:#fff;font-weight:normal;font-style:italic;letter-spacing:0.1px">Action (State)</div>
<svg style="position:absolute;left:341px;top:144px;" width="14" height="14" viewBox="0 0 14 14"><circle cx="5.5" cy="5.7" r="3.5" fill="none" stroke="#fff" stroke-width="1"/><circle cx="8.6" cy="8.8" r="3.5" fill="none" stroke="#fff" stroke-width="1"/></svg>
<div style="position:absolute;left:216px;top:192px;width:154px;height:206px;background:#f9f9f9;border:1px solid #d3d3d3;box-sizing:border-box"></div>
<div class="t" style="left:223.4px;top:199.5px;font-size:12px;color:#2b2b2b;font-weight:normal;font-style:normal;">Marks</div>
<div style="position:absolute;left:223px;top:228px;width:140px;height:21px;background:#fafafa;border:1px solid #d3d3d3;box-sizing:border-box;border-radius:1px"></div>
<div style="position:absolute;left:344px;top:229px;width:1px;height:19px;background:#dcdcdc"></div>
<svg style="position:absolute;left:349.5px;top:236.5px;" width="8" height="5" viewBox="0 0 8 5"><path d="M0.3 0.3H7.4L3.85 4.3Z" fill="#555"/></svg>
<svg style="position:absolute;left:232px;top:232px;" width="18" height="12" viewBox="0 0 18 12"><path d="M2 9.8L6.8 4.5L11 8.8L16 2.2" fill="none" stroke="#555" stroke-width="1.2"/></svg>
<div class="t" style="left:253.4px;top:230.0px;font-size:10.5px;color:#2b2b2b;font-weight:normal;font-style:normal;">Automatic</div>
<div style="position:absolute;left:223px;top:255px;width:43px;height:42px;background:#fafafa;border:1px solid #d6d6d6;box-sizing:border-box"></div>
<div class="t" style="left:223px;width:43px;text-align:center;top:279.5px;font-size:10.5px;color:#222">Color</div>
<div style="position:absolute;left:272px;top:255px;width:42px;height:42px;background:#fafafa;border:1px solid #d6d6d6;box-sizing:border-box"></div>
<div class="t" style="left:272px;width:42px;text-align:center;top:279.5px;font-size:10.5px;color:#222">Size</div>
<div style="position:absolute;left:320px;top:255px;width:43px;height:42px;background:#fafafa;border:1px solid #d6d6d6;box-sizing:border-box"></div>
<div class="t" style="left:320px;width:43px;text-align:center;top:279.5px;font-size:10.5px;color:#222">Label</div>
<div style="position:absolute;left:223px;top:303px;width:43px;height:42px;background:#fafafa;border:1px solid #d6d6d6;box-sizing:border-box"></div>
<div class="t" style="left:223px;width:43px;text-align:center;top:327.8px;font-size:10.5px;color:#222">Detail</div>
<div style="position:absolute;left:272px;top:303px;width:42px;height:42px;background:#fafafa;border:1px solid #d6d6d6;box-sizing:border-box"></div>
<div class="t" style="left:272px;width:42px;text-align:center;top:327.8px;font-size:10.5px;color:#222">Tooltip</div>
<div style="position:absolute;left:320px;top:303px;width:43px;height:42px;background:#fafafa;border:1px solid #d6d6d6;box-sizing:border-box"></div>
<div class="t" style="left:320px;width:43px;text-align:center;top:327.8px;font-size:10.5px;color:#222">Path</div>
<svg style="position:absolute;left:230px;top:255px;" width="24" height="24" viewBox="0 0 24 24"><circle cx="9.9" cy="10.1" r="3.0" fill="#86709e"/><circle cx="18.0" cy="10.1" r="3.0" fill="#ec6e84"/><circle cx="9.9" cy="18.2" r="3.0" fill="#eda47a"/><circle cx="18.0" cy="18.2" r="3.0" fill="#82a6cd"/></svg>
<svg style="position:absolute;left:280px;top:255px;" width="24" height="24" viewBox="0 0 24 24"><circle cx="13" cy="13.5" r="6.4" fill="#fafafa" stroke="#555" stroke-width="1.1"/><circle cx="9.3" cy="17.6" r="3" fill="#fafafa" stroke="#555" stroke-width="1.1"/></svg>
<svg style="position:absolute;left:330px;top:258px;" width="24" height="24" viewBox="0 0 24 24"><rect x="4.5" y="5.8" width="12.4" height="10.8" fill="none" stroke="#555" stroke-width="1.1"/><path d="M7.6 8.8V8.1H13.8V8.8M10.7 8.1V14M9.4 14H12" fill="none" stroke="#555" stroke-width="1.1"/></svg>
<svg style="position:absolute;left:230px;top:306px;" width="24" height="20" viewBox="0 0 24 20"><circle cx="14" cy="7.9" r="2" fill="#555"/><circle cx="8.7" cy="13.9" r="1.55" fill="none" stroke="#555" stroke-width="0.9"/><circle cx="13.9" cy="13.9" r="1.55" fill="none" stroke="#555" stroke-width="0.9"/><circle cx="19.1" cy="13.9" r="1.55" fill="none" stroke="#555" stroke-width="0.9"/></svg>
<svg style="position:absolute;left:280px;top:306px;" width="24" height="20" viewBox="0 0 24 20"><path d="M6.8 5.2H19.2Q19.7 5.2 19.7 5.7V12.8Q19.7 13.3 19.2 13.3H16.8L16.3 17.4L12.8 13.3H6.8Q6.3 13.3 6.3 12.8V5.7Q6.3 5.2 6.8 5.2Z" fill="none" stroke="#555" stroke-width="1.1" stroke-linejoin="round"/></svg>
<svg style="position:absolute;left:330px;top:306px;" width="24" height="20" viewBox="0 0 24 20"><path d="M4 15L8.4 10L13 13.8L18 7" fill="none" stroke="#555" stroke-width="1.2"/></svg>
<svg style="position:absolute;left:226px;top:352px;" width="20" height="20" viewBox="0 0 20 20"><circle cx="6.9" cy="7.9" r="3.0" fill="#86709e"/><circle cx="15.0" cy="7.9" r="3.0" fill="#ec6e84"/><circle cx="6.9" cy="15.5" r="3.0" fill="#eda47a"/><circle cx="15.0" cy="15.5" r="3.0" fill="#82a6cd"/></svg>
<div style="position:absolute;left:248px;top:354px;width:111px;height:20px;background:#4a96b3;border-radius:10px"></div>
<div class="t" style="left:258.8px;top:355.0px;font-size:12px;color:#fff;font-weight:normal;font-style:normal;">Category</div>
<div style="position:absolute;left:376px;top:40px;width:1058px;height:28px;background:#f9f9f9;border:1px solid #d3d3d3;box-sizing:border-box"></div>
<div style="position:absolute;left:501px;top:41px;width:1px;height:26px;background:#dddddd"></div>
<div style="position:absolute;left:376px;top:74px;width:1058px;height:28px;background:#f9f9f9;border:1px solid #d3d3d3;box-sizing:border-box"></div>
<div style="position:absolute;left:501px;top:75px;width:1px;height:26px;background:#dddddd"></div>
<svg style="position:absolute;left:383px;top:45px;" width="14" height="16" viewBox="0 0 14 16"><rect x="1.3" y="2" width="1.9" height="1.9" fill="#555"/><rect x="5.1" y="2" width="1.9" height="1.9" fill="#555"/><rect x="8.9" y="2" width="1.9" height="1.9" fill="#555"/><rect x="1.3" y="5.5" width="1.9" height="7.6" fill="#555"/><rect x="5.1" y="5.5" width="1.9" height="7.6" fill="#555"/><rect x="8.9" y="5.5" width="1.9" height="7.6" fill="#555"/></svg>
<div class="t" style="left:402.3px;top:45.5px;font-size:12px;color:#2b2b2b;font-weight:normal;font-style:normal;">Columns</div>
<svg style="position:absolute;left:382px;top:80px;" width="14" height="14" viewBox="0 0 14 14"><rect x="0.7" y="2" width="2" height="2" fill="#555"/><rect x="0.7" y="5.8" width="2" height="2" fill="#555"/><rect x="0.7" y="9.6" width="2" height="2" fill="#555"/><rect x="4.2" y="2.3" width="8" height="1.3" fill="#555"/><rect x="4.2" y="6.1" width="8" height="1.3" fill="#555"/><rect x="4.2" y="9.9" width="8" height="1.3" fill="#555"/></svg>
<div class="t" style="left:402.3px;top:79.5px;font-size:12px;color:#2b2b2b;font-weight:normal;font-style:normal;">Rows</div>
<div style="position:absolute;left:504px;top:44px;width:148px;height:20px;background:#00b181;border-radius:10px"></div>
<svg style="position:absolute;left:514px;top:47px;" width="14" height="14" viewBox="0 0 14 14"><rect x="1.6" y="3" width="8.2" height="8.2" fill="none" stroke="#fff" stroke-width="0.9"/><path d="M5.7 4.7V9.5M3.3 7.1H8.1" stroke="#fff" stroke-width="0.9"/></svg>
<div class="t" style="left:531.7px;top:45.5px;font-size:12px;color:#fff;font-weight:normal;font-style:normal;">YEAR(Order Date)</div>
<div style="position:absolute;left:504px;top:78px;width:148px;height:20px;background:#00b181;border-radius:10px"></div>
<div class="t" style="left:514.8px;top:79.5px;font-size:12px;color:#fff;font-weight:normal;font-style:normal;letter-spacing:0.12px">SUM(NameOfMeasur..</div>
<div style="position:absolute;left:376px;top:108px;width:898px;height:735px;background:#fff;border:1px solid #d3d3d3;box-sizing:border-box"></div>
<div class="t" style="left:388px;top:125.5px;font-size:21px;color:#3a3a3a;font-weight:normal;font-style:normal;">Category Parameter</div>
<svg style="position:absolute;left:0;top:0" width="1440" height="900"><rect x="440" y="719.67" width="825" height="1" fill="#efefef"/><rect x="440" y="661.34" width="825" height="1" fill="#efefef"/><rect x="440" y="603.01" width="825" height="1" fill="#efefef"/><rect x="440" y="544.68" width="825" height="1" fill="#efefef"/><rect x="440" y="486.35" width="825" height="1" fill="#efefef"/><rect x="440" y="428.02" width="825" height="1" fill="#efefef"/><rect x="440" y="369.69" width="825" height="1" fill="#efefef"/><rect x="440" y="311.36" width="825" height="1" fill="#efefef"/><rect x="440" y="253.03" width="825" height="1" fill="#efefef"/><rect x="440" y="194.70" width="825" height="1" fill="#efefef"/><rect x="440" y="778.0" width="825" height="1" fill="#e3e3e3"/><rect x="445" y="156" width="1" height="622.5" fill="#ebebeb"/><rect x="462.36" y="778.5" width="1" height="1.5" fill="#e6e6e6"/><rect x="483.00" y="778.5" width="1" height="4" fill="#e0e0e0"/><rect x="503.64" y="778.5" width="1" height="1.5" fill="#e6e6e6"/><rect x="524.28" y="778.5" width="1" height="1.5" fill="#e6e6e6"/><rect x="544.92" y="778.5" width="1" height="1.5" fill="#e6e6e6"/><rect x="565.57" y="778.5" width="1" height="1.5" fill="#e6e6e6"/><rect x="586.21" y="778.5" width="1" height="1.5" fill="#e6e6e6"/><rect x="606.85" y="778.5" width="1" height="1.5" fill="#e6e6e6"/><rect x="627.49" y="778.5" width="1" height="1.5" fill="#e6e6e6"/><rect x="648.13" y="778.5" width="1" height="1.5" fill="#e6e6e6"/><rect x="668.77" y="778.5" width="1" height="1.5" fill="#e6e6e6"/><rect x="689.42" y="778.5" width="1" height="1.5" fill="#e6e6e6"/><rect x="710.06" y="778.5" width="1" height="1.5" fill="#e6e6e6"/><rect x="730.70" y="778.5" width="1" height="4" fill="#e0e0e0"/><rect x="751.34" y="778.5" width="1" height="1.5" fill="#e6e6e6"/><rect x="771.98" y="778.5" width="1" height="1.5" fill="#e6e6e6"/><rect x="792.62" y="778.5" width="1" height="1.5" fill="#e6e6e6"/><rect x="813.27" y="778.5" width="1" height="1.5" fill="#e6e6e6"/><rect x="833.91" y="778.5" width="1" height="1.5" fill="#e6e6e6"/><rect x="854.55" y="778.5" width="1" height="1.5" fill="#e6e6e6"/><rect x="875.19" y="778.5" width="1" height="1.5" fill="#e6e6e6"/><rect x="895.83" y="778.5" width="1" height="1.5" fill="#e6e6e6"/><rect x="916.47" y="778.5" width="1" height="1.5" fill="#e6e6e6"/><rect x="937.12" y="778.5" width="1" height="1.5" fill="#e6e6e6"/><rect x="957.76" y="778.5" width="1" height="1.5" fill="#e6e6e6"/><rect x="978.40" y="778.5" width="1" height="4" fill="#e0e0e0"/><rect x="999.04" y="778.5" width="1" height="1.5" fill="#e6e6e6"/><rect x="1019.68" y="778.5" width="1" height="1.5" fill="#e6e6e6"/><rect x="1040.32" y="778.5" width="1" height="1.5" fill="#e6e6e6"/><rect x="1060.97" y="778.5" width="1" height="1.5" fill="#e6e6e6"/><rect x="1081.61" y="778.5" width="1" height="1.5" fill="#e6e6e6"/><rect x="1102.25" y="778.5" width="1" height="1.5" fill="#e6e6e6"/><rect x="1122.89" y="778.5" width="1" height="1.5" fill="#e6e6e6"/><rect x="1143.53" y="778.5" width="1" height="1.5" fill="#e6e6e6"/><rect x="1164.17" y="778.5" width="1" height="1.5" fill="#e6e6e6"/><rect x="1184.82" y="778.5" width="1" height="1.5" fill="#e6e6e6"/><rect x="1205.46" y="778.5" width="1" height="1.5" fill="#e6e6e6"/><rect x="1226.10" y="778.5" width="1" height="4" fill="#e0e0e0"/><rect x="1246.74" y="778.5" width="1" height="1.5" fill="#e6e6e6"/><polyline points="483.5,515.2 731.2,485.9 978.8,370.0 1226.1,314.4" fill="none" stroke="#aec7e8" stroke-width="2.9" stroke-linecap="round" stroke-linejoin="round"/><polyline points="483.5,528.0 731.2,387.5 978.8,315.0 1226.1,187.4" fill="none" stroke="#ff7f0e" stroke-width="2.9" stroke-linecap="round" stroke-linejoin="round"/><polyline points="483.5,714.8 731.2,743.1 978.8,697.3 1226.1,743.3" fill="none" stroke="#1f77b4" stroke-width="2.9" stroke-linecap="round" stroke-linejoin="round"/></svg>
<div class="t" style="left:380px;width:58px;text-align:right;top:762.5px;font-size:12px;color:#555">0K</div>
<div class="t" style="left:380px;width:58px;text-align:right;top:712.6px;font-size:12px;color:#555">5K</div>
<div class="t" style="left:380px;width:58px;text-align:right;top:654.2px;font-size:12px;color:#555">10K</div>
<div class="t" style="left:380px;width:58px;text-align:right;top:595.9px;font-size:12px;color:#555">15K</div>
<div class="t" style="left:380px;width:58px;text-align:right;top:537.6px;font-size:12px;color:#555">20K</div>
<div class="t" style="left:380px;width:58px;text-align:right;top:479.2px;font-size:12px;color:#555">25K</div>
<div class="t" style="left:380px;width:58px;text-align:right;top:420.9px;font-size:12px;color:#555">30K</div>
<div class="t" style="left:380px;width:58px;text-align:right;top:362.6px;font-size:12px;color:#555">35K</div>
<div class="t" style="left:380px;width:58px;text-align:right;top:304.3px;font-size:12px;color:#555">40K</div>
<div class="t" style="left:380px;width:58px;text-align:right;top:245.9px;font-size:12px;color:#555">45K</div>
<div class="t" style="left:380px;width:58px;text-align:right;top:187.6px;font-size:12px;color:#555">50K</div>
<div class="t" style="left:453.5px;width:60px;text-align:center;top:786.2px;font-size:12.5px;color:#555">2013</div>
<div class="t" style="left:701.2px;width:60px;text-align:center;top:786.2px;font-size:12.5px;color:#555">2014</div>
<div class="t" style="left:948.8px;width:60px;text-align:center;top:786.2px;font-size:12.5px;color:#555">2015</div>
<div class="t" style="left:1196.1px;width:60px;text-align:center;top:786.2px;font-size:12.5px;color:#555">2016</div>
<div class="t" style="left:794.3px;width:120px;text-align:center;top:809.7px;font-size:12px;font-weight:bold;color:#454545">Year of Order Date</div>
<div class="t" style="left:352.2px;top:457.8px;width:100px;text-align:center;font-size:12.5px;color:#333;transform:rotate(-90deg);transform-origin:50% 50%">NameOfMeasure</div>
<div style="position:absolute;left:1280px;top:108px;width:154px;height:114px;background:#fff;border:1px solid #d3d3d3;box-sizing:border-box"></div>
<div style="position:absolute;left:1281px;top:109px;width:152px;height:29px;background:#f8f8f8"></div>
<div class="t" style="left:1287.8px;top:116.0px;font-size:12px;color:#222;font-weight:normal;font-style:normal;">MeasureValue</div>
<svg style="position:absolute;left:1286px;top:143.0px;" width="15" height="15" viewBox="0 0 15 15"><circle cx="7.4" cy="7.5" r="5.8" fill="#fff" stroke="#c8c8c8" stroke-width="0.9"/></svg>
<div class="t" style="left:1307.7px;top:142.5px;font-size:12.5px;color:#333;font-weight:normal;font-style:normal;">Discount</div>
<svg style="position:absolute;left:1286px;top:162.0px;" width="15" height="15" viewBox="0 0 15 15"><circle cx="7.4" cy="7.5" r="5.6" fill="#fff" stroke="#555" stroke-width="1.1"/><circle cx="7.4" cy="7.5" r="2.6" fill="#555"/></svg>
<div class="t" style="left:1307.7px;top:161.5px;font-size:12.5px;color:#333;font-weight:normal;font-style:normal;">Profit</div>
<svg style="position:absolute;left:1286px;top:181.0px;" width="15" height="15" viewBox="0 0 15 15"><circle cx="7.4" cy="7.5" r="5.8" fill="#fff" stroke="#c8c8c8" stroke-width="0.9"/></svg>
<div class="t" style="left:1307.7px;top:180.5px;font-size:12.5px;color:#333;font-weight:normal;font-style:normal;">Quantity</div>
<svg style="position:absolute;left:1286px;top:200.0px;" width="15" height="15" viewBox="0 0 15 15"><circle cx="7.4" cy="7.5" r="5.8" fill="#fff" stroke="#c8c8c8" stroke-width="0.9"/></svg>
<div class="t" style="left:1307.7px;top:199.5px;font-size:12.5px;color:#333;font-weight:normal;font-style:normal;">Sales</div>
<div style="position:absolute;left:1280px;top:228px;width:154px;height:92px;background:#fff;border:1px solid #d3d3d3;box-sizing:border-box"></div>
<div style="position:absolute;left:1281px;top:229px;width:152px;height:29px;background:#f8f8f8"></div>
<div class="t" style="left:1287.8px;top:235.5px;font-size:12px;color:#222;font-weight:normal;font-style:normal;">Category</div>
<div style="position:absolute;left:1284px;top:261px;width:14px;height:14px;background:#1f77b4"></div>
<div class="t" style="left:1303.5px;top:261.0px;font-size:12.5px;color:#333;font-weight:normal;font-style:normal;">Furniture</div>
<div style="position:absolute;left:1284px;top:281px;width:14px;height:14px;background:#aec7e8"></div>
<div class="t" style="left:1303.5px;top:281.0px;font-size:12.5px;color:#333;font-weight:normal;font-style:normal;">Office Supplies</div>
<div style="position:absolute;left:1284px;top:301px;width:14px;height:14px;background:#ff7f0e"></div>
<div class="t" style="left:1303.5px;top:301.0px;font-size:12.5px;color:#333;font-weight:normal;font-style:normal;">Technology</div>
<div style="position:absolute;left:0px;top:849px;width:1440px;height:31px;background:#e6e6e6;border-top:1px solid #c9c9c9;border-bottom:1px solid #cfcfcf;box-sizing:border-box"></div>
<div style="position:absolute;left:414px;top:849px;width:129px;height:30px;background:#f9f9f9;border-top:1px solid #c9c9c9;box-sizing:border-box"></div>
<div style="position:absolute;left:130px;top:850px;width:1px;height:29px;background:#cdcdcd"></div>
<div style="position:absolute;left:147px;top:850px;width:1px;height:29px;background:#cdcdcd"></div>
<div style="position:absolute;left:255px;top:850px;width:1px;height:29px;background:#cdcdcd"></div>
<div style="position:absolute;left:375px;top:850px;width:1px;height:29px;background:#cdcdcd"></div>
<div style="position:absolute;left:413px;top:850px;width:1px;height:29px;background:#cdcdcd"></div>
<div style="position:absolute;left:543px;top:850px;width:1px;height:29px;background:#cdcdcd"></div>
<div style="position:absolute;left:651px;top:850px;width:1px;height:29px;background:#cdcdcd"></div>
<div style="position:absolute;left:780px;top:850px;width:1px;height:29px;background:#cdcdcd"></div>
<div style="position:absolute;left:934px;top:850px;width:1px;height:29px;background:#cdcdcd"></div>
<div style="position:absolute;left:1066px;top:850px;width:1px;height:29px;background:#cdcdcd"></div>
<div style="position:absolute;left:1245px;top:850px;width:1px;height:29px;background:#cdcdcd"></div>
<div style="position:absolute;left:1343px;top:850px;width:1px;height:29px;background:#cdcdcd"></div>
<div style="position:absolute;left:1375px;top:850px;width:1px;height:29px;background:#cdcdcd"></div>
<div style="position:absolute;left:1407px;top:850px;width:1px;height:29px;background:#cdcdcd"></div>
<svg style="position:absolute;left:8px;top:856px;" width="12" height="16" viewBox="0 0 12 16"><path d="M2.6 3.4Q2.6 2.2 6 2.2Q9.4 2.2 9.4 3.4V11.1Q9.4 12.3 6 12.3Q2.6 12.3 2.6 11.1Z M2.6 3.6Q2.6 4.8 6 4.8Q9.4 4.8 9.4 3.6" fill="none" stroke="#666" stroke-width="1"/></svg>
<div class="t" style="left:24.3px;top:856.5px;font-size:12px;color:#4a4a4a;font-weight:normal;font-style:normal;">Data Source</div>
<div style="position:absolute;left:131px;top:850px;width:16px;height:29px;overflow:hidden"><div class="t" style="left:-1.8px;top:6.8px;font-size:12px;color:#4a4a4a">d</div></div>
<div class="t" style="left:153.4px;top:856.5px;font-size:12px;color:#4a4a4a;font-weight:normal;font-style:normal;">Trend of Returns</div>
<svg style="position:absolute;left:263px;top:858px;" width="12" height="12" viewBox="0 0 12 12"><rect x="0.6" y="0.6" width="10" height="10" rx="1" fill="none" stroke="#555" stroke-width="1.1"/><path d="M5.6 0.6V10.6M0.6 5.6H10.6" stroke="#555" stroke-width="1.1"/></svg>
<div class="t" style="left:278.8px;top:856.5px;font-size:12px;color:#4a4a4a;font-weight:normal;font-style:normal;letter-spacing:0.05px">Return Analysis</div>
<div class="t" style="left:381.6px;top:856.5px;font-size:12px;color:#4a4a4a;font-weight:normal;font-style:normal;">Sets</div>
<div class="t" style="left:420.4px;top:856.0px;font-size:12px;color:#454545;font-weight:bold;font-style:normal;">Category Parameter</div>
<div class="t" style="left:548.6px;top:856.5px;font-size:12px;color:#4a4a4a;font-weight:normal;font-style:normal;letter-spacing:0.2px">TableCalculation</div>
<div class="t" style="left:655.6px;top:856.5px;font-size:12px;color:#4a4a4a;font-weight:normal;font-style:normal;letter-spacing:0.2px">State wise Returned</div>
<div class="t" style="left:786px;top:856.5px;font-size:12px;color:#4a4a4a;font-weight:normal;font-style:normal;">Category Wise Measures</div>
<div class="t" style="left:940px;top:856.5px;font-size:12px;color:#4a4a4a;font-weight:normal;font-style:normal;">State Wise Measures</div>
<div class="t" style="left:1072.5px;top:856.5px;font-size:12px;color:#4a4a4a;font-weight:normal;font-style:normal;">Sub Category Wise Measures</div>
<svg style="position:absolute;left:1253px;top:858px;" width="12" height="12" viewBox="0 0 12 12"><rect x="0.6" y="0.6" width="10" height="10" rx="1" fill="none" stroke="#555" stroke-width="1.1"/><path d="M5.6 0.6V10.6M0.6 5.6H10.6" stroke="#555" stroke-width="1.1"/></svg>
<div style="position:absolute;left:1269px;top:850px;width:74px;height:29px;overflow:hidden"><div class="t" style="left:0;top:6.8px;font-size:12px;color:#4a4a4a">Combined Measures</div></div>
<svg style="position:absolute;left:1350px;top:855px;" width="22" height="22" viewBox="0 0 22 22"><path d="M10.4 13.75H3.2V3.3H13.6V10.2" fill="none" stroke="#555" stroke-width="1.1"/><rect x="5.5" y="8.4" width="1.2" height="3" fill="#555"/><rect x="7.6" y="6" width="1.2" height="5.4" fill="#555"/><rect x="9.7" y="7.4" width="1.2" height="3.2" fill="#555"/><path d="M10.1 13.75H17.9M14 9.85V17.65" stroke="#505050" stroke-width="2.1"/></svg>
<svg style="position:absolute;left:1382px;top:855px;" width="22" height="22" viewBox="0 0 22 22"><path d="M10.6 13.75H3.1V3.3H13.6V10.2M8.35 3.3V13.75M3.1 8.5H13.6" fill="none" stroke="#555" stroke-width="1.1"/><path d="M10.35 13.75H18.15M14.25 9.85V17.65" stroke="#505050" stroke-width="2.1"/></svg>
<svg style="position:absolute;left:1414px;top:855px;" width="22" height="22" viewBox="0 0 22 22"><path d="M3 4.2L7.6 3.2V12.6L3 13.6Z M7.6 3.2L13.4 4.2V10.2 M7.6 12.6L10.4 13.4" fill="none" stroke="#555" stroke-width="1.1" stroke-linejoin="round"/><path d="M10.3 13.75H18.1M14.2 9.85V17.65" stroke="#505050" stroke-width="2.1"/></svg>
<div style="position:absolute;left:0px;top:880px;width:1440px;height:20px;background:#ebebeb"></div>
<div style="position:absolute;left:1064px;top:880px;width:1px;height:20px;background:#d2d2d2"></div>
<div style="position:absolute;left:1191px;top:880px;width:1px;height:20px;background:#d2d2d2"></div>
<div style="position:absolute;left:1218px;top:880px;width:1px;height:20px;background:#d2d2d2"></div>
<div style="position:absolute;left:1245px;top:880px;width:1px;height:20px;background:#d2d2d2"></div>
<div style="position:absolute;left:1292px;top:880px;width:1px;height:20px;background:#d2d2d2"></div>
<div style="position:absolute;left:1363px;top:880px;width:1px;height:20px;background:#d2d2d2"></div>
<div class="t" style="left:12.5px;top:882.0px;font-size:10.5px;color:#2a2a2a;font-weight:normal;font-style:normal;">12 marks</div>
<div class="t" style="left:72.5px;top:882.0px;font-size:10.5px;color:#2a2a2a;font-weight:normal;font-style:normal;">1 row by 1 column</div>
<div class="t" style="left:171.5px;top:882.0px;font-size:10.5px;color:#2a2a2a;font-weight:normal;font-style:normal;">SUM(NameOfMeasure): 286,397</div>
<svg style="position:absolute;left:1298px;top:882px;" width="60" height="14" viewBox="0 0 60 14"><rect x="2.7" y="4.3" width="1.4" height="6.6" fill="#555"/><path d="M4.5 7.6L9.2 4.3V10.9Z" fill="#555"/><path d="M19.6 7.6L24 4.3V10.9Z" fill="#555"/><path d="M40.1 7.6L35.75 4.3V10.9Z" fill="#555"/><path d="M55.6 7.6L50.9 4.3V10.9Z" fill="#555"/><rect x="55.75" y="4.3" width="1.45" height="6.6" fill="#555"/></svg>
<svg style="position:absolute;left:1371px;top:883px;" width="14" height="14" viewBox="0 0 14 14"><rect x="1" y="1" width="3" height="3" fill="#c9c9c9"/><rect x="1" y="5" width="3" height="3" fill="#c9c9c9"/><rect x="1" y="9" width="3" height="3" fill="#c9c9c9"/><rect x="5" y="1" width="3" height="3" fill="#c9c9c9"/><rect x="5" y="5" width="3" height="3" fill="#c9c9c9"/><rect x="5" y="9" width="3" height="3" fill="#c9c9c9"/><rect x="9" y="1" width="3" height="3" fill="#c9c9c9"/><rect x="9" y="5" width="3" height="3" fill="#c9c9c9"/><rect x="9" y="9" width="3" height="3" fill="#c9c9c9"/></svg>
<svg style="position:absolute;left:1391px;top:883px;" width="16" height="14" viewBox="0 0 16 14"><rect x="1.3" y="1" width="12" height="7.4" fill="#bdbdbd"/><rect x="1.3" y="9.4" width="3.6" height="2.4" fill="#c9c9c9"/><rect x="5.6" y="9.4" width="3.6" height="2.4" fill="#c9c9c9"/><rect x="9.9" y="9.4" width="3.6" height="2.4" fill="#c9c9c9"/></svg>
<div style="position:absolute;left:1413.8px;top:883.8px;width:11.4px;height:11.2px;background:#5c5c5c"></div>
</body></html>
